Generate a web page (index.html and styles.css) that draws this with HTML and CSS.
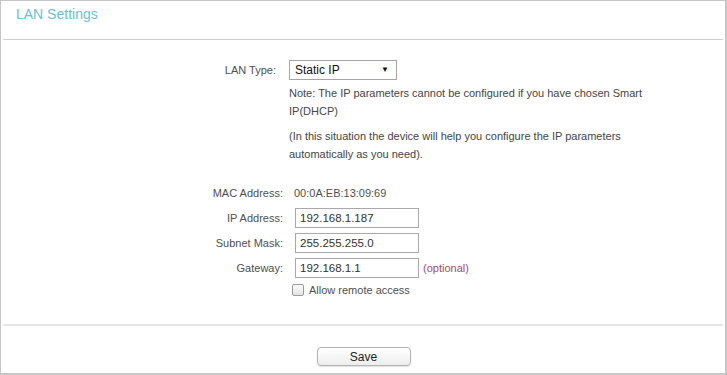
FILE: index.html
```html
<!DOCTYPE html>
<html lang="en">
<head>
    <meta charset="UTF-8">
    <title>LAN Settings</title>
    <link rel="stylesheet" href="styles.css">
</head>
<body>
<div class="panel">
    <header class="panel-head">
        <h2>LAN Settings</h2>
    </header>
    <form class="lan-form" id="lan-form">
        <div class="row row-type">
            <label class="row-label" for="lan-type">LAN Type:</label>
            <div class="select-wrap">
                <select id="lan-type" name="lan-type">
                    <option>Static IP</option>
                    <option>Smart IP(DHCP)</option>
                </select>
                <span class="select-arrow">&#9660;</span>
            </div>
        </div>
        <div class="note">
            <p>Note: The IP parameters cannot be configured if you have chosen Smart IP(DHCP)</p>
            <p>(In this situation the device will help you configure the IP parameters automatically as you need).</p>
        </div>
        <div class="row row-mac">
            <span class="row-label">MAC Address:</span>
            <span class="mac-value">00:0A:EB:13:09:69</span>
        </div>
        <div class="row row-field">
            <label class="row-label" for="ip">IP Address:</label>
            <input id="ip" type="text" value="192.168.1.187">
        </div>
        <div class="row row-field">
            <label class="row-label" for="mask">Subnet Mask:</label>
            <input id="mask" type="text" value="255.255.255.0">
        </div>
        <div class="row row-field">
            <label class="row-label" for="gateway">Gateway:</label>
            <input id="gateway" type="text" value="192.168.1.1">
            <span class="optional">(optional)</span>
        </div>
        <div class="row row-check">
            <span class="row-label"></span>
            <label class="check-label"><span class="checkbox"></span>Allow remote access</label>
        </div>
        <div class="form-foot">
            <button type="submit" class="save-button">Save</button>
        </div>
    </form>
</div>
</body>
</html>
```

FILE: styles.css
```css
body {
    margin: 0;
    padding: 0;
    font-family: "Liberation Sans", Arial, sans-serif;
    font-size: 11px;
    color: #4f4f4f;
    background: #fff;
}

.panel {
    box-sizing: border-box;
    width: 727px;
    height: 375px;
    border: 1px solid #c6c6c6;
    border-right-width: 2px;
    border-bottom-width: 2px;
}

.panel-head {
    height: 38px;
    margin: 0 2px;
    border-bottom: 1px solid #cfcfcf;
}

.panel-head h2 {
    margin: 0;
    padding-left: 13px;
    font-size: 14px;
    font-weight: normal;
    line-height: 26px;
    color: #68c1d6;
}

.lan-form {
    padding-top: 20px;
}

.row {
    display: flex;
    align-items: center;
    height: 20px;
}

.row-label {
    box-sizing: border-box;
    width: 288px;
    padding-right: 6px;
    text-align: right;
    flex-shrink: 0;
}

.row-type .row-label {
    padding-right: 13px;
}

.select-wrap {
    position: relative;
    width: 108px;
    height: 20px;
}

.select-wrap select {
    appearance: none;
    box-sizing: border-box;
    width: 108px;
    height: 20px;
    margin: 0;
    padding: 0 0 0 5px;
    border: 1px solid #a6a6a6;
    border-radius: 0;
    background: #fff;
    font-family: "Liberation Sans", Arial, sans-serif;
    font-size: 12px;
    color: #111;
}

.select-arrow {
    position: absolute;
    right: 8px;
    top: 5px;
    font-size: 8px;
    color: #111;
    pointer-events: none;
}

.note {
    margin: 4px 0 0 288px;
    width: 362px;
    color: #454545;
    line-height: 18px;
}

.note p {
    margin: 0 0 7px;
}

.row-mac {
    margin-top: 20px;
}

.mac-value {
    padding-left: 5px;
}

.row-field {
    margin-top: 4px;
    height: 21px;
}

.row-field:first-of-type {
    margin-top: 3px;
}

.row-field input {
    box-sizing: border-box;
    width: 124px;
    height: 20px;
    margin: 0 0 0 6px;
    padding: 0 4px;
    border: 1px solid #a9a9a9;
    font-family: "Liberation Sans", Arial, sans-serif;
    font-size: 11.5px;
    color: #333;
}

.optional {
    padding-left: 4px;
    color: #b0476b;
}

.row-check {
    margin-top: 3px;
    height: 18px;
}

.check-label {
    display: flex;
    align-items: center;
    margin-left: 3px;
}

.checkbox {
    box-sizing: border-box;
    width: 12px;
    height: 12px;
    margin-right: 5px;
    border: 1px solid #9a9a9a;
    border-radius: 2px;
    background: linear-gradient(#fdfdfd, #e2e2e2);
}

.form-foot {
    margin: 25px 2px 0;
    padding-top: 21px;
    border-top: 2px solid #e6e6e6;
    text-align: center;
}

.save-button {
    box-sizing: border-box;
    width: 94px;
    height: 19px;
    margin-left: 1px;
    padding: 0;
    border: 1px solid #b4b4b4;
    border-radius: 4px;
    background: linear-gradient(#ffffff, #ededed);
    box-shadow: 0 1px 1px rgba(0, 0, 0, 0.12);
    font-family: "Liberation Sans", Arial, sans-serif;
    font-size: 12px;
    color: #222;
    cursor: pointer;
}
```
